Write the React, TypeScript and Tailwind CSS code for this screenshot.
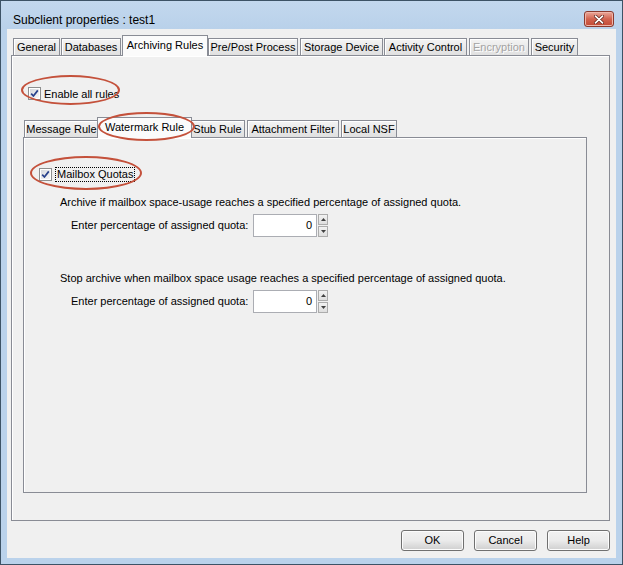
import React from 'react';

const FONT = "font-['Liberation_Sans',Arial,sans-serif]";

function CheckBox() {
  return (
    <span className="w-[13px] h-[13px] shrink-0 border border-[#8e8f8f] bg-white p-px flex">
      <span className="flex-1 bg-gradient-to-br from-[#d6d9de] to-[#f7f7f7] flex items-center justify-center">
        <svg viewBox="0 0 9 9" className="w-[9px] h-[9px]">
          <path d="M1.2 4.6 L3.4 7 L7.8 1.4" stroke="#27408b" strokeWidth="1.7" fill="none" strokeLinejoin="round" />
        </svg>
      </span>
    </span>
  );
}

function Ellipse({ className }: { className: string }) {
  return (
    <span className={`absolute pointer-events-none border-2 border-[#c4513b] rounded-[50%] ${className}`} />
  );
}

type TabDef = { label: string; w: string; ml: string; active?: boolean; disabled?: boolean };

const MAIN_TABS: TabDef[] = [
  { label: 'General', w: 'w-[47px]', ml: 'ml-[1px]' },
  { label: 'Databases', w: 'w-[60px]', ml: 'ml-[1px]' },
  { label: 'Archiving Rules', w: 'w-[86px]', ml: 'ml-[1px]', active: true },
  { label: 'Pre/Post Process', w: 'w-[90px]', ml: 'ml-0' },
  { label: 'Storage Device', w: 'w-[83px]', ml: 'ml-[2px]' },
  { label: 'Activity Control', w: 'w-[83px]', ml: 'ml-[1px]' },
  { label: 'Encryption', w: 'w-[60px]', ml: 'ml-[2px]', disabled: true },
  { label: 'Security', w: 'w-[47px]', ml: 'ml-[2px]' },
];

const SUB_TABS: TabDef[] = [
  { label: 'Message Rule', w: 'w-[75px]', ml: 'ml-[1px]' },
  { label: 'Watermark Rule', w: 'w-[95px]', ml: '-ml-[2px] -mr-[2px]', active: true },
  { label: 'Stub Rule', w: 'w-[55px]', ml: 'ml-0' },
  { label: 'Attachment Filter', w: 'w-[92px]', ml: 'ml-[2px]' },
  { label: 'Local NSF', w: 'w-[56px]', ml: 'ml-[2px]' },
];

function Tab({ t }: { t: TabDef }) {
  if (t.active) {
    return (
      <div
        className={`relative z-10 ${t.w} ${t.ml} h-[21px] border border-b-0 border-[#898c95] bg-[#fbfbfb] flex items-center justify-center pb-[2px] text-[11px] text-black whitespace-nowrap`}
      >
        {t.label}
        {t.label === 'Watermark Rule' && <Ellipse className="left-0 -top-[6px] w-[97px] h-[29px]" />}
      </div>
    );
  }
  return (
    <div
      className={`${t.w} ${t.ml} h-[18px] border border-[#898c95] bg-gradient-to-b from-[#f4f4f4] to-[#e0e0e0] shadow-[inset_1px_1px_0_#ffffff] flex items-center justify-center text-[11px] whitespace-nowrap ${
        t.disabled ? 'text-[#a3a3a3] [text-shadow:1px_1px_0_#ffffff]' : 'text-black'
      }`}
    >
      {t.label}
    </div>
  );
}

function SpinBox() {
  return (
    <div className="flex items-stretch h-[23px]">
      <div className="w-[64px] border border-[#abadb3] bg-white flex items-center justify-end pr-[4px] text-[11px]">0</div>
      <div className="ml-px w-[10px] flex flex-col gap-px">
        <div className="flex-1 border border-[#acacac] bg-gradient-to-b from-[#f2f2f2] to-[#dedede] flex items-center justify-center">
          <svg viewBox="0 0 5 3" className="w-[5px] h-[3px]"><path d="M0 3 L2.5 0 L5 3 Z" fill="#404040" /></svg>
        </div>
        <div className="flex-1 border border-[#acacac] bg-gradient-to-b from-[#f2f2f2] to-[#dedede] flex items-center justify-center">
          <svg viewBox="0 0 5 3" className="w-[5px] h-[3px]"><path d="M0 0 L2.5 3 L5 0 Z" fill="#404040" /></svg>
        </div>
      </div>
    </div>
  );
}

function Button({ label }: { label: string }) {
  return (
    <button className="w-[63px] h-[21px] rounded-[3px] border border-[#707070] bg-gradient-to-b from-[#f2f2f2] via-[#ebebeb] to-[#cfcfcf] shadow-[inset_0_0_0_1px_#fcfcfc] text-[11px] text-black flex items-center justify-center">
      {label}
    </button>
  );
}

export default function App() {
  return (
    <div className={`${FONT} w-[623px] h-[565px] border border-[#3d5366] bg-[#bad2eb] flex flex-col text-black`}>
      {/* Title bar */}
      <div className="h-[28px] bg-gradient-to-b from-[#c3d8ee] to-[#b9d1ea] flex items-start justify-between pl-[12px] pr-[8px]">
        <span className="mt-[12px] text-[12px] leading-[14px]">Subclient properties : test1</span>
        <div className="mt-[10px] w-[30px] h-[16px] rounded-[3px] border border-[#8b3a2e] bg-gradient-to-b from-[#e9a89b] via-[#d2634f] to-[#c24a35] shadow-[inset_0_0_0_1px_#efb6aa] flex items-center justify-center">
          <svg viewBox="0 0 10 9" className="w-[10px] h-[9px]">
            <path d="M1.5 1.2 L8.5 7.8 M8.5 1.2 L1.5 7.8" stroke="#5a1f16" strokeWidth="3.2" strokeLinecap="round" />
            <path d="M1.5 1.2 L8.5 7.8 M8.5 1.2 L1.5 7.8" stroke="#ffffff" strokeWidth="1.8" strokeLinecap="round" />
          </svg>
        </div>
      </div>

      {/* Client area */}
      <div className="flex-1 mx-[6px] mb-[6px] bg-[#f0f0f0] flex flex-col pt-[6px] pl-[4px] pr-[6px]">
        <div className="flex items-end -mb-px h-[21px] pl-px">
          {MAIN_TABS.map(t => (
            <Tab key={t.label} t={t} />
          ))}
        </div>

        {/* Main panel */}
        <div className="h-[466px] border border-[#898c95] bg-[#f0f0f0] shadow-[inset_1px_1px_0_#ffffff] flex flex-col pb-[27px] pr-[22px]">
          <div className="mt-[30px] ml-[16px] h-[15px] flex items-center relative self-start">
            <CheckBox />
            <span className="ml-[3px] text-[11px] leading-[14px]">Enable all rules</span>
            <Ellipse className="-left-[7px] -top-[11px] w-[99px] h-[30px]" />
          </div>

          <div className="mt-[16px] ml-[11px] flex items-end -mb-px h-[21px]">
            {SUB_TABS.map(t => (
              <Tab key={t.label} t={t} />
            ))}
          </div>

          {/* Sub panel */}
          <div className="ml-[11px] flex-1 border border-[#898c95] bg-[#f0f0f0] shadow-[inset_1px_1px_0_#ffffff] flex flex-col text-[11px]">
            <div className="mt-[29px] ml-[15px] h-[15px] flex items-center relative self-start">
              <CheckBox />
              <span className="ml-[3px] leading-[13px] border border-dotted border-black px-px">Mailbox Quotas</span>
              <Ellipse className="-left-[9px] -top-[11px] w-[112px] h-[34px]" />
            </div>

            <div className="mt-[13px] ml-[36px] leading-[14px] whitespace-nowrap">
              Archive if mailbox space-usage reaches a specified percentage of assigned quota.
            </div>
            <div className="mt-[5px] ml-[47px] flex items-center">
              <span className="w-[182px] whitespace-nowrap">Enter percentage of assigned quota:</span>
              <SpinBox />
            </div>

            <div className="mt-[34px] ml-[36px] leading-[14px] whitespace-nowrap">
              Stop archive when mailbox space usage reaches a specified percentage of assigned quota.
            </div>
            <div className="mt-[5px] ml-[47px] flex items-center">
              <span className="w-[182px] whitespace-nowrap">Enter percentage of assigned quota:</span>
              <SpinBox />
            </div>
          </div>
        </div>

        {/* Buttons */}
        <div className="mt-[9px] flex justify-end gap-[10px]">
          <Button label="OK" />
          <Button label="Cancel" />
          <Button label="Help" />
        </div>
      </div>
    </div>
  );
}
